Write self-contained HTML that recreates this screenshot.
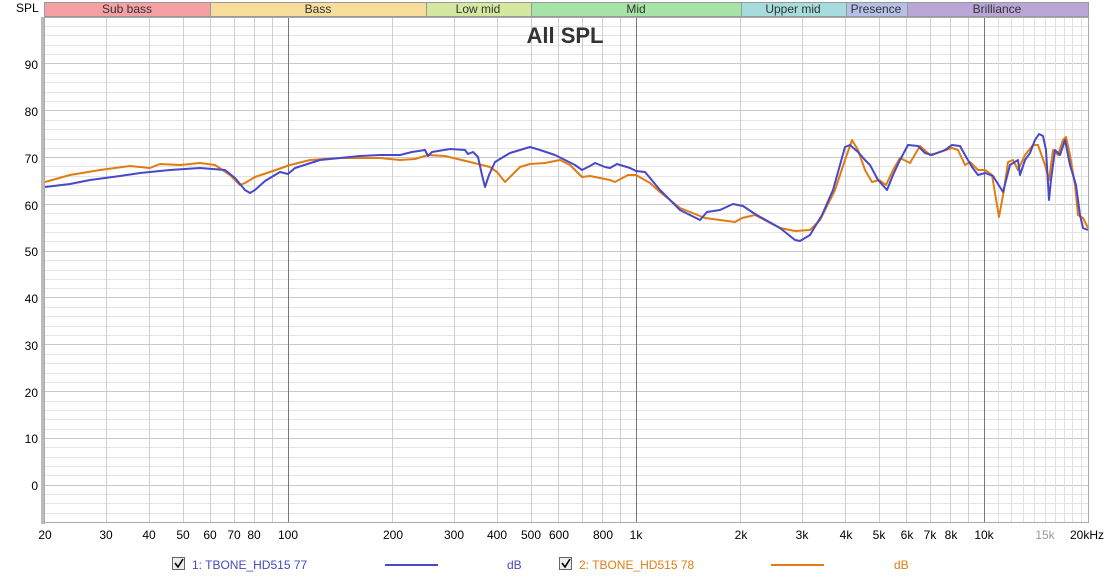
<!DOCTYPE html>
<html><head><meta charset="utf-8"><style>
body{margin:0;width:1110px;height:579px;background:#fff;overflow:hidden;font-family:"Liberation Sans",sans-serif}
svg text{font-family:"Liberation Sans",sans-serif}
</style></head><body>
<svg width="1110" height="579" xmlns="http://www.w3.org/2000/svg">
<g font-size="12" fill="#000">
<text x="16" y="12">SPL</text>
</g>
<g stroke="#999" stroke-width="1">
<rect x="44.5" y="2.5" width="166" height="14" fill="#f4a0a4"/>
<rect x="210.5" y="2.5" width="216" height="14" fill="#f6dd9a"/>
<rect x="426.5" y="2.5" width="105" height="14" fill="#d6e8a0"/>
<rect x="531.5" y="2.5" width="210" height="14" fill="#a6e3a6"/>
<rect x="741.5" y="2.5" width="105" height="14" fill="#a6dcdc"/>
<rect x="846.5" y="2.5" width="61" height="14" fill="#b6bfe6"/>
<rect x="907.5" y="2.5" width="181" height="14" fill="#b9a6d6"/>
</g>
<g font-size="12" fill="#333" text-anchor="middle">
<text x="127" y="13">Sub bass</text><text x="318" y="13">Bass</text><text x="478" y="13">Low mid</text>
<text x="636" y="13">Mid</text><text x="793" y="13">Upper mid</text><text x="876" y="13">Presence</text><text x="997" y="13">Brilliance</text>
</g>
<rect x="41" y="17" width="4" height="507" fill="#bbb"/>
<rect x="44.5" y="17.5" width="1044" height="505" fill="#fff" stroke="#aaa"/>
<path stroke="#e4e4e4" stroke-width="1" fill="none" d="M45 26.5H1088M45 35.5H1088M45 45.5H1088M45 54.5H1088M45 73.5H1088M45 82.5H1088M45 92.5H1088M45 101.5H1088M45 120.5H1088M45 129.5H1088M45 139.5H1088M45 148.5H1088M45 166.5H1088M45 176.5H1088M45 185.5H1088M45 195.5H1088M45 213.5H1088M45 223.5H1088M45 232.5H1088M45 241.5H1088M45 260.5H1088M45 270.5H1088M45 279.5H1088M45 288.5H1088M45 307.5H1088M45 316.5H1088M45 326.5H1088M45 335.5H1088M45 354.5H1088M45 363.5H1088M45 373.5H1088M45 382.5H1088M45 401.5H1088M45 410.5H1088M45 419.5H1088M45 429.5H1088M45 447.5H1088M45 457.5H1088M45 466.5H1088M45 475.5H1088M45 494.5H1088M45 503.5H1088M45 513.5H1088"/>
<path stroke="#c8c8c8" stroke-width="1" fill="none" d="M45 63.5H1088M45 110.5H1088M45 157.5H1088M45 204.5H1088M45 251.5H1088M45 297.5H1088M45 344.5H1088M45 391.5H1088M45 438.5H1088M45 485.5H1088"/>
<path stroke="#cfcfcf" stroke-width="1" fill="none" d="M106.5 18V522M149.5 18V522M183.5 18V522M210.5 18V522M234.5 18V522M254.5 18V522M272.5 18V522M392.5 18V522M454.5 18V522M497.5 18V522M531.5 18V522M558.5 18V522M582.5 18V522M602.5 18V522M620.5 18V522M740.5 18V522M802.5 18V522M845.5 18V522M879.5 18V522M906.5 18V522M930.5 18V522M950.5 18V522M968.5 18V522"/>
<path stroke="#e0e0e0" stroke-width="1" fill="none" d="M998.5 18V522M1011.5 18V522M1023.5 18V522M1034.5 18V522M1045.5 18V522M1055.5 18V522M1064.5 18V522M1072.5 18V522M1081.5 18V522"/>
<path stroke="#777" stroke-width="1" fill="none" d="M288.5 18V522M636.5 18V522M984.5 18V522"/>
<g font-size="12" fill="#000" text-anchor="end">
<text x="38" y="69">90</text><text x="38" y="116">80</text><text x="38" y="163">70</text><text x="38" y="210">60</text>
<text x="38" y="256">50</text><text x="38" y="303">40</text><text x="38" y="350">30</text><text x="38" y="397">20</text>
<text x="38" y="443">10</text><text x="38" y="490">0</text>
</g>
<text x="565" y="43" font-size="22" font-weight="bold" fill="#333" text-anchor="middle">All SPL</text>
<g font-size="12" fill="#000" text-anchor="middle">
<text x="45" y="539">20</text><text x="106" y="539">30</text><text x="149" y="539">40</text><text x="183" y="539">50</text>
<text x="210" y="539">60</text><text x="234" y="539">70</text><text x="254" y="539">80</text><text x="288" y="539">100</text>
<text x="393" y="539">200</text><text x="454" y="539">300</text><text x="497" y="539">400</text><text x="531" y="539">500</text>
<text x="559" y="539">600</text><text x="603" y="539">800</text><text x="636" y="539">1k</text><text x="741" y="539">2k</text>
<text x="802" y="539">3k</text><text x="846" y="539">4k</text><text x="879" y="539">5k</text><text x="907" y="539">6k</text>
<text x="930" y="539">7k</text><text x="951" y="539">8k</text><text x="984" y="539">10k</text>
<text x="1045" y="539" fill="#999">15k</text><text x="1087" y="539">20kHz</text>
</g>
<polyline fill="none" stroke="#e07c14" stroke-width="2" stroke-linejoin="round" points="45,182 70,175 100,170 130,166 150,168 160,164 180,165 200,163 215,165 230,175 240,185 245,183 255,177 270,172 290,165 310,160 340,158 380,158 400,160 415,159 428,155 445,156 470,162 490,167 497,172 505,182 510,177 520,167 530,164 545,163 560,160 570,165 582,177 590,176 610,180 615,182 628,175 636,175 650,183 660,192 680,208 705,218 735,222 742,218 755,215 780,228 795,231 810,230 820,220 835,190 845,160 852,140 858,150 865,170 872,182 879,180 886,185 893,170 900,158 910,163 920,146 930,155 940,152 952,148 958,150 965,165 970,162 978,170 985,170 992,175 999,217 1004,190 1008,162 1013,160 1018,170 1025,155 1033,145 1038,145 1045,165 1049,180 1053,150 1058,155 1063,140 1066,137 1070,155 1075,185 1078,215 1083,218 1088,228"/>
<polyline fill="none" stroke="#4848c8" stroke-width="2" stroke-linejoin="round" points="45,187 70,184 90,180 120,176 140,173 170,170 200,168 225,170 235,178 245,190 250,193 255,190 265,181 280,172 288,174 295,168 320,160 360,156 380,155 400,155 412,152 425,150 428,156 432,152 450,149 465,150 468,154 473,152 478,157 482,175 485,187 489,175 495,162 510,153 530,147 540,150 555,155 565,160 575,165 582,170 590,166 595,163 605,167 610,168 617,164 630,168 636,171 645,172 660,190 680,210 700,220 707,212 720,210 733,204 743,206 755,214 780,228 795,240 800,241 810,235 822,215 833,190 845,147 850,145 858,152 865,160 870,165 878,180 887,190 893,175 900,160 908,145 918,146 925,153 932,155 945,150 952,145 960,146 965,155 972,167 978,175 985,173 993,176 1003,192 1010,165 1018,160 1020,175 1025,160 1030,153 1035,140 1039,134 1043,136 1046,150 1049,200 1051,180 1055,150 1060,155 1065,140 1070,165 1076,185 1080,215 1083,228 1088,230"/>
<g font-size="12">
<rect x="172.5" y="557.5" width="12" height="12" fill="#eee" stroke="#666"/>
<path d="M175 563 l3 4 l5 -8" fill="none" stroke="#000" stroke-width="1.6"/>
<text x="192" y="569" fill="#4848b8">1: TBONE_HD515 77</text>
<line x1="385" x2="438" y1="565" y2="565" stroke="#4848c8" stroke-width="2"/>
<text x="507" y="569" fill="#4848b8">dB</text>
<rect x="559.5" y="557.5" width="12" height="12" fill="#eee" stroke="#666"/>
<path d="M562 563 l3 4 l5 -8" fill="none" stroke="#000" stroke-width="1.6"/>
<text x="579" y="569" fill="#e07c14">2: TBONE_HD515 78</text>
<line x1="771" x2="824" y1="565" y2="565" stroke="#e07c14" stroke-width="2"/>
<text x="894" y="569" fill="#e07c14">dB</text>
</g>
</svg>
</body></html>
